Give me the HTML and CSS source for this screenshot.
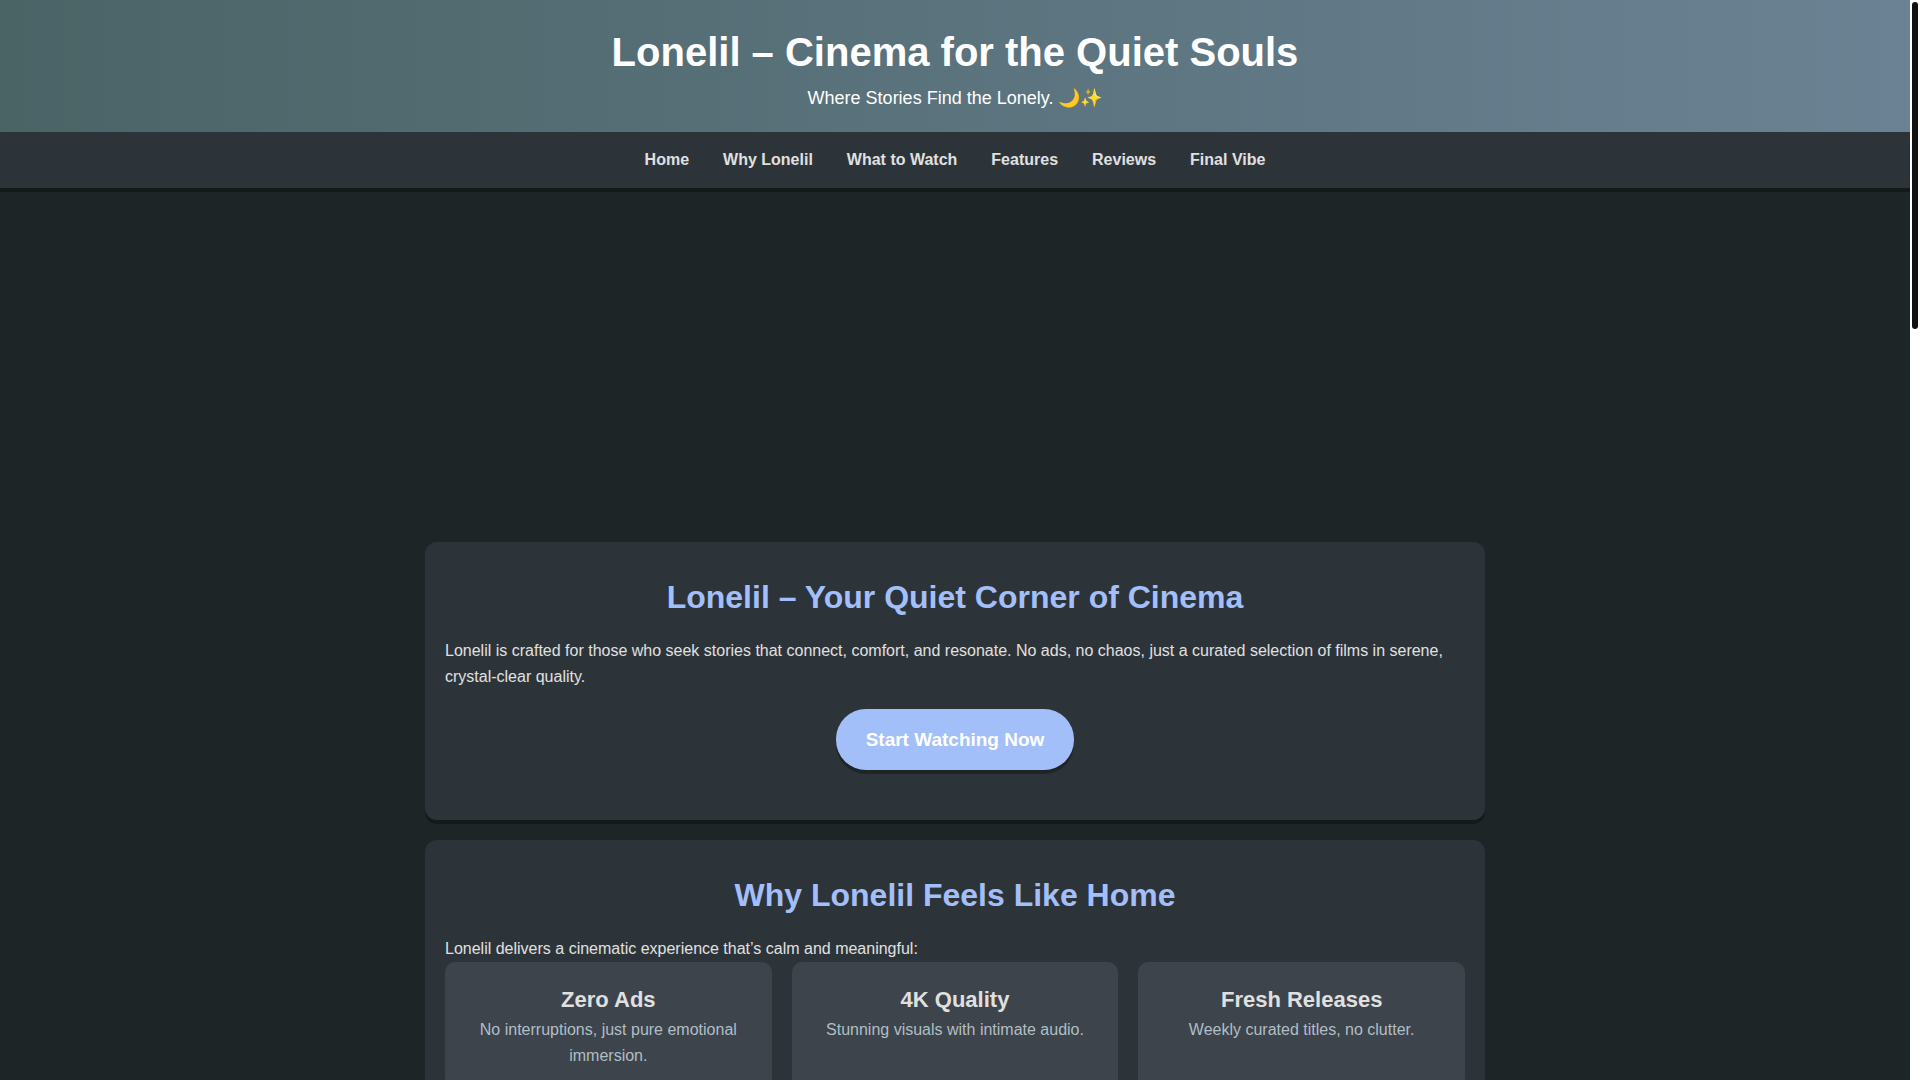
FILE: index.html
```html
<!DOCTYPE html>
<html lang="en">
<head>
<meta charset="utf-8">
<meta name="viewport" content="width=device-width, initial-scale=1">
<title>Lonelil – Cinema for the Quiet Souls</title>
<link rel="stylesheet" href="styles.css">
</head>
<body>
<div class="page">
  <header class="site-header">
    <h1 class="site-title">Lonelil – Cinema for the Quiet Souls</h1>
    <p class="site-tagline">Where Stories Find the Lonely. 🌙✨</p>
  </header>
  <nav class="site-nav">
    <ul class="nav-list">
      <li><a class="nav-link" href="#home">Home</a></li>
      <li><a class="nav-link" href="#why">Why Lonelil</a></li>
      <li><a class="nav-link" href="#watch">What to Watch</a></li>
      <li><a class="nav-link" href="#features">Features</a></li>
      <li><a class="nav-link" href="#reviews">Reviews</a></li>
      <li><a class="nav-link" href="#final">Final Vibe</a></li>
    </ul>
  </nav>
  <main class="container">
    <section class="panel" id="home">
      <h2 class="panel-title">Lonelil – Your Quiet Corner of Cinema</h2>
      <p>Lonelil is crafted for those who seek stories that connect, comfort, and resonate. No ads, no chaos, just a curated selection of films in serene, crystal-clear quality.</p>
      <button class="cta" type="button">Start Watching Now</button>
    </section>
    <section class="panel" id="why">
      <h2 class="panel-title">Why Lonelil Feels Like Home</h2>
      <p>Lonelil delivers a cinematic experience that’s calm and meaningful:</p>
      <div class="features">
        <article class="feature">
          <h3 class="feature-title">Zero Ads</h3>
          <p class="feature-text">No interruptions, just pure emotional immersion.</p>
        </article>
        <article class="feature">
          <h3 class="feature-title">4K Quality</h3>
          <p class="feature-text">Stunning visuals with intimate audio.</p>
        </article>
        <article class="feature">
          <h3 class="feature-title">Fresh Releases</h3>
          <p class="feature-text">Weekly curated titles, no clutter.</p>
        </article>
      </div>
    </section>
  </main>
</div>
<div class="scroll-rail" aria-hidden="true"><div class="scroll-thumb"></div></div>
</body>
</html>
```
FILE: styles.css
```css
* {
  box-sizing: border-box;
  margin: 0;
  padding: 0;
}

html {
  scrollbar-width: none;
}

body {
  display: grid;
  grid-template-columns: minmax(0, 1fr) 10px;
  background: #1e2526;
  color: #e0e0e0;
  font-family: "Liberation Sans", Arial, sans-serif;
  font-size: 16px;
  line-height: 26px;
}

/* Scroll indicator that stays in view beside the page */
.scroll-rail {
  position: sticky;
  top: 0;
  height: 100vh;
  padding: 2px;
  background: #ffffff;
}

.scroll-thumb {
  height: 30.4%;
  border-radius: 3px;
  background: #111111;
}

.site-header {
  padding: 20px;
  background: linear-gradient(90deg, #4a6466, #6b8294);
  color: #ffffff;
  text-align: center;
}

.site-title {
  font-size: 40px;
  line-height: 64px;
}

.site-tagline {
  font-size: 18px;
  line-height: 28px;
}

.site-nav {
  padding: 15px;
  background: #2d3439;
  box-shadow: 0 4px 0 rgba(0, 0, 0, 0.3);
}

.nav-list {
  display: flex;
  flex-wrap: wrap;
  justify-content: center;
  gap: 0 34px;
  list-style: none;
}

.nav-link {
  color: #e0e0e0;
  font-weight: 700;
  text-decoration: none;
}

.container {
  display: flex;
  flex-direction: column;
  gap: 20px;
  max-width: 1100px;
  margin: 0 auto;
  padding: 354px 20px 20px;
}

.panel {
  padding: 30px 20px;
  border-radius: 12px;
  background: #2d3439;
  box-shadow: 0 4px 0 rgba(0, 0, 0, 0.3);
}

.panel-title {
  margin-bottom: 15px;
  color: #a3bffa;
  font-size: 32px;
  line-height: 51px;
  text-align: center;
}

.cta {
  display: block;
  margin: 19px auto 20px;
  padding: 15px 30px;
  border: 0;
  border-radius: 30px;
  background: #a3bffa;
  box-shadow: 0 4px 0 rgba(0, 0, 0, 0.3);
  color: #ffffff;
  font-family: inherit;
  font-size: 19px;
  font-weight: 700;
  line-height: 31px;
  cursor: pointer;
}

.features {
  display: grid;
  grid-template-columns: repeat(auto-fit, minmax(250px, 1fr));
  gap: 20px;
}

.feature {
  padding: 20px;
  border-radius: 10px;
  background: #3d444b;
  text-align: center;
}

.feature-title {
  font-size: 22px;
  line-height: 35px;
}

.feature-text {
  color: #b0bec5;
}
```
